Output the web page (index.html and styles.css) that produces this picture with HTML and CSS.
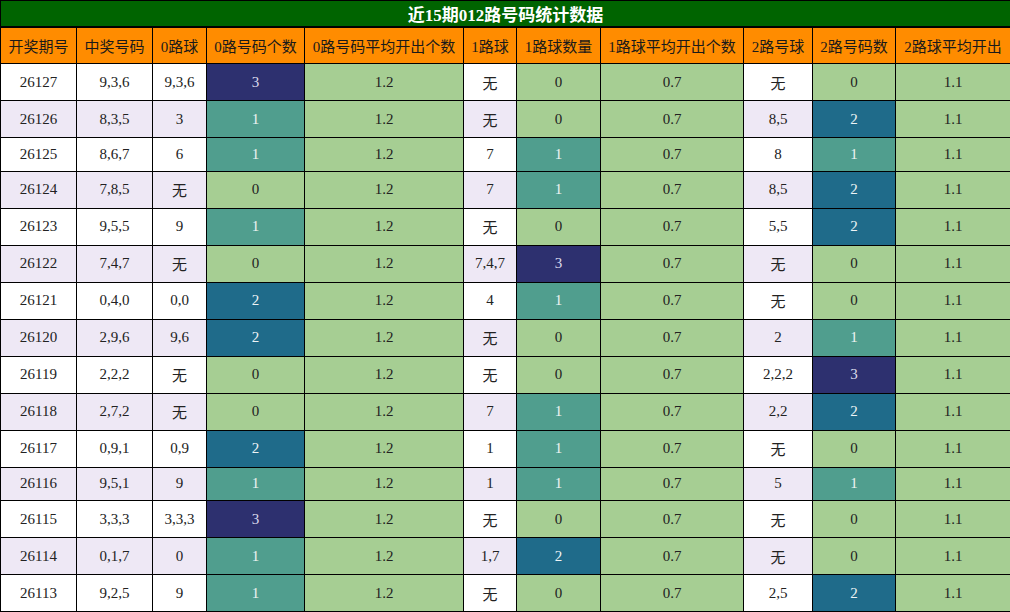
FILE: index.html
```html
<!DOCTYPE html>
<html lang="zh">
<head>
<meta charset="utf-8">
<title>近15期012路号码统计数据</title>
<link rel="stylesheet" href="styles.css">
</head>
<body>
<table class="stats">
  <colgroup>
    <col class="c-period"><col class="c-win"><col class="c-r0"><col class="c-r0n"><col class="c-r0avg"><col class="c-r1"><col class="c-r1n"><col class="c-r1avg"><col class="c-r2"><col class="c-r2n"><col class="c-r2avg">
  </colgroup>
  <thead>
    <tr><th class="title" colspan="11">近15期012路号码统计数据</th></tr>
    <tr class="head">
      <th>开奖期号</th><th>中奖号码</th><th>0路球</th><th>0路号码个数</th><th>0路号码平均开出个数</th><th>1路球</th><th>1路球数量</th><th>1路球平均开出个数</th><th>2路号球</th><th>2路号码数</th><th>2路球平均开出</th>
    </tr>
  </thead>
  <tbody>
    <tr><td>26127</td><td>9,3,6</td><td>9,3,6</td><td class="n3">3</td><td class="avg">1.2</td><td>无</td><td class="n0">0</td><td class="avg">0.7</td><td>无</td><td class="n0">0</td><td class="avg">1.1</td></tr>
    <tr><td>26126</td><td>8,3,5</td><td>3</td><td class="n1">1</td><td class="avg">1.2</td><td>无</td><td class="n0">0</td><td class="avg">0.7</td><td>8,5</td><td class="n2">2</td><td class="avg">1.1</td></tr>
    <tr><td>26125</td><td>8,6,7</td><td>6</td><td class="n1">1</td><td class="avg">1.2</td><td>7</td><td class="n1">1</td><td class="avg">0.7</td><td>8</td><td class="n1">1</td><td class="avg">1.1</td></tr>
    <tr><td>26124</td><td>7,8,5</td><td>无</td><td class="n0">0</td><td class="avg">1.2</td><td>7</td><td class="n1">1</td><td class="avg">0.7</td><td>8,5</td><td class="n2">2</td><td class="avg">1.1</td></tr>
    <tr><td>26123</td><td>9,5,5</td><td>9</td><td class="n1">1</td><td class="avg">1.2</td><td>无</td><td class="n0">0</td><td class="avg">0.7</td><td>5,5</td><td class="n2">2</td><td class="avg">1.1</td></tr>
    <tr><td>26122</td><td>7,4,7</td><td>无</td><td class="n0">0</td><td class="avg">1.2</td><td>7,4,7</td><td class="n3">3</td><td class="avg">0.7</td><td>无</td><td class="n0">0</td><td class="avg">1.1</td></tr>
    <tr><td>26121</td><td>0,4,0</td><td>0,0</td><td class="n2">2</td><td class="avg">1.2</td><td>4</td><td class="n1">1</td><td class="avg">0.7</td><td>无</td><td class="n0">0</td><td class="avg">1.1</td></tr>
    <tr><td>26120</td><td>2,9,6</td><td>9,6</td><td class="n2">2</td><td class="avg">1.2</td><td>无</td><td class="n0">0</td><td class="avg">0.7</td><td>2</td><td class="n1">1</td><td class="avg">1.1</td></tr>
    <tr><td>26119</td><td>2,2,2</td><td>无</td><td class="n0">0</td><td class="avg">1.2</td><td>无</td><td class="n0">0</td><td class="avg">0.7</td><td>2,2,2</td><td class="n3">3</td><td class="avg">1.1</td></tr>
    <tr><td>26118</td><td>2,7,2</td><td>无</td><td class="n0">0</td><td class="avg">1.2</td><td>7</td><td class="n1">1</td><td class="avg">0.7</td><td>2,2</td><td class="n2">2</td><td class="avg">1.1</td></tr>
    <tr><td>26117</td><td>0,9,1</td><td>0,9</td><td class="n2">2</td><td class="avg">1.2</td><td>1</td><td class="n1">1</td><td class="avg">0.7</td><td>无</td><td class="n0">0</td><td class="avg">1.1</td></tr>
    <tr><td>26116</td><td>9,5,1</td><td>9</td><td class="n1">1</td><td class="avg">1.2</td><td>1</td><td class="n1">1</td><td class="avg">0.7</td><td>5</td><td class="n1">1</td><td class="avg">1.1</td></tr>
    <tr><td>26115</td><td>3,3,3</td><td>3,3,3</td><td class="n3">3</td><td class="avg">1.2</td><td>无</td><td class="n0">0</td><td class="avg">0.7</td><td>无</td><td class="n0">0</td><td class="avg">1.1</td></tr>
    <tr><td>26114</td><td>0,1,7</td><td>0</td><td class="n1">1</td><td class="avg">1.2</td><td>1,7</td><td class="n2">2</td><td class="avg">0.7</td><td>无</td><td class="n0">0</td><td class="avg">1.1</td></tr>
    <tr><td>26113</td><td>9,2,5</td><td>9</td><td class="n1">1</td><td class="avg">1.2</td><td>无</td><td class="n0">0</td><td class="avg">0.7</td><td>2,5</td><td class="n2">2</td><td class="avg">1.1</td></tr>
  </tbody>
</table>
</body>
</html>
```

FILE: styles.css
```css
html, body {
  margin: 0;
  padding: 0;
  background: #ffffff;
}

.stats {
  width: 1010px;
  table-layout: fixed;
  border-collapse: collapse;
  font-family: "Liberation Serif", "Noto Sans CJK SC", serif;
  font-size: 15px;
  color: #222222;
}

.c-period { width: 76px; }
.c-win { width: 76px; }
.c-r0 { width: 54px; }
.c-r0n { width: 98px; }
.c-r0avg { width: 159px; }
.c-r1 { width: 53px; }
.c-r1n { width: 84px; }
.c-r1avg { width: 143px; }
.c-r2 { width: 69px; }
.c-r2n { width: 83px; }
.c-r2avg { width: 115px; }

.stats th,
.stats td {
  border: 1px solid #000000;
  text-align: center;
  vertical-align: middle;
  padding: 7px 0;
  white-space: nowrap;
  overflow: hidden;
}

.stats td {
  padding: 7.5px 0;
}

.stats tbody tr {
  height: 33.5px;
}

.stats .title {
  background: #006400;
  color: #ffffff;
  font-size: 17px;
  font-weight: bold;
  padding: 0;
  height: 25px;
  border-bottom: 2px solid #000000;
}

.head th {
  background: #ff8c00;
  font-weight: normal;
  color: #1a1a1a;
}

.stats tbody tr:nth-child(odd) td { background: #ffffff; }
.stats tbody tr:nth-child(even) td { background: #eee8f5; }

.stats tbody tr td.avg,
.stats tbody tr td.n0 { background: #a6ce93; }
.stats tbody tr td.n1 { background: #509e8e; color: #eef4f2; }
.stats tbody tr td.n2 { background: #1f6b8a; color: #eef4f6; }
.stats tbody tr td.n3 { background: #2d306f; color: #dcdcec; }
```
